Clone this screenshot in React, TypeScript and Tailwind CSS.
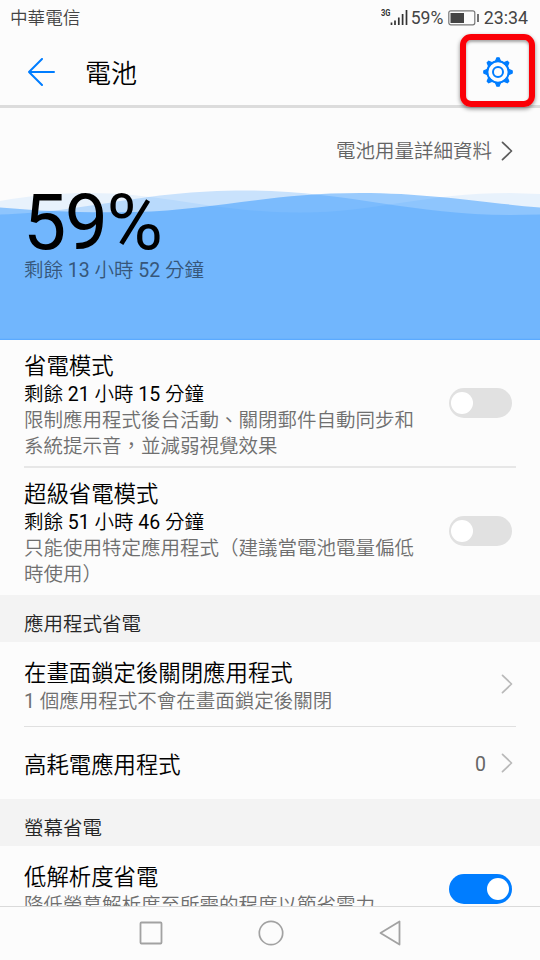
import React from "react";

type RowProps = { title: string; status?: string; detail?: string };

const Toggle = ({ on = false }: { on?: boolean }) => (
  <div className={on ? "flex h-[30px] w-[63px] shrink-0 items-center justify-end rounded-full bg-[#007dff] px-[2.5px]" : "flex h-[30px] w-[63px] shrink-0 items-center rounded-full bg-[#e1e1e1] px-[2.5px]"}>
    <div className="size-[22px] rounded-full bg-white" />
  </div>
);

const Chevron = ({ dark = false }: { dark?: boolean }) => (
  <svg width="12" height="20" viewBox="0 0 12 20" fill="none" stroke={dark ? "#5c5c5c" : "#b9b9b9"} strokeWidth="1.7" strokeLinecap="round" strokeLinejoin="round" className="shrink-0">
    <path d="M1.5 1.3 L10.5 10 L1.5 18.7" />
  </svg>
);

// Digits are set one step heavier than the surrounding CJK text.
const Mixed = ({ text }: { text: string }) => (
  <>
    {text.split(/(\d+)/).map((part, i) =>
      /^\d+$/.test(part) ? <span key={i} className="font-normal">{part}</span> : part
    )}
  </>
);

const Copy = ({ title, status, detail }: RowProps) => (
  <div className="flex flex-col">
    <div className="text-[22.4px] leading-[30px] text-black">{title}</div>
    {status && <div className="text-[19.5px] leading-[27px] text-black"><Mixed text={status} /></div>}
    {detail && <div className={status ? "w-[400px] text-[19.5px] leading-[26px] text-[#6f6f6f]" : "mt-px w-[400px] text-[19.5px] leading-[26px] text-[#6f6f6f]"}><Mixed text={detail} /></div>}
  </div>
);

const Section = ({ label }: { label: string }) => (
  <div className="flex h-[47px] shrink-0 items-center bg-[#f3f3f3] px-6 pt-[12px] text-[19.5px] leading-[27px] text-[#262626]">{label}</div>
);

export default function App() {
  return (
    <div className="flex h-[960px] w-[540px] flex-col overflow-hidden bg-[#fcfcfc] font-['Roboto','Noto_Sans_CJK_TC',sans-serif] font-[350]">
      <div className="flex h-9 shrink-0 items-center justify-between pr-3 pl-[10px] text-[17.6px] text-[#444]">
        <span>中華電信</span>
        <div className="flex items-center font-normal">
          <svg width="27" height="20" viewBox="0 0 27 20" className="shrink-0">
            <text x="0" y="8" fontSize="9" fontWeight="700" fontFamily="Roboto" textLength="9.5" lengthAdjust="spacingAndGlyphs" fill="#333">3G</text>
            <path d="M10.500 14.500v2.500M14 12.500V17M17.800 9.500V17M21.600 6V17M25.500 2V17" stroke="#333" strokeWidth="1.700" />
          </svg>
          <span className="ml-[3px] w-[33px] text-[17.6px]">59%</span>
          <svg width="31" height="16" viewBox="0 0 31 16" className="ml-[4px] shrink-0">
            <rect x="0.8" y="0.8" width="26" height="14" rx="2" fill="none" stroke="#777" strokeWidth="1.200" />
            <rect x="2.500" y="3" width="13.500" height="10" fill="#444" />
            <path d="M30 4v8" stroke="#444" strokeWidth="1.500" />
          </svg>
          <span className="ml-[5px] text-[17.8px]">23:34</span>
        </div>
      </div>

      <div className="flex h-[72px] shrink-0 items-center border-b-[3px] border-[#dcdcdc] pl-7">
        <svg width="27" height="28" viewBox="0 0 27 28" fill="none" stroke="#007dff" strokeWidth="2" strokeLinecap="round" strokeLinejoin="round" className="mt-[3px]">
          <path d="M26 14H1M14 1L1 14L14 27" />
        </svg>
        <h1 className="mt-[6px] ml-[30px] text-[26px] leading-[36px] text-black">電池</h1>
        <div className="mr-[5px] ml-auto flex h-[73px] w-[75px] items-center justify-center rounded-[11px] border-[6px] border-[#fb0007] pt-[2px] pl-px shadow-[0_2px_4px_rgba(0,0,0,0.45),inset_0_2px_3px_rgba(0,0,0,0.35)]">
          <svg width="32" height="32" viewBox="-16 -16 32 32" fill="none" stroke="#007dff" className="shrink-0">
            <circle r="10.700" strokeWidth="2" />
            <circle r="5" strokeWidth="2" />
            {[0, 45, 90, 135, 180, 225, 270, 315].map((angle) => (
              <path key={angle} transform={`rotate(${angle})`} d="M-2.600 -10.500L-1.100 -14.200H1.100L2.600 -10.500Z" fill="#007dff" strokeWidth="1.200" strokeLinejoin="round" />
            ))}
          </svg>
        </div>
      </div>

      <section className="relative h-[232px] shrink-0 overflow-hidden">
        <svg width="540" height="150" viewBox="0 190 540 150" fill="#007dff" className="absolute bottom-0 left-0">
          <path d="M0 201C30 195.500 60 193 90 193C165 193 215 212.500 300 212.500C375 212.500 425 193 510 193L540 194V340H0Z" fillOpacity=".08" />
          <path d="M0 214.500C90 212 140 190.500 245 190.500C345 190.500 410 215 510 215L540 214.500V340H0Z" fillOpacity=".2" />
          <path d="M0 207.500C45 211.500 85 213 135 212C215 210 270 193 360 193C430 193 485 203 540 207.500V340H0Z" fillOpacity=".39" />
          <path d="M0 339.400H540" stroke="#5baaff" strokeWidth="1.200" />
        </svg>
        <div className="relative flex flex-col">
          <div className="mt-[30px] flex items-center justify-end gap-[9px] pr-[27px] text-[19.5px] leading-[28px] text-[#646464]">
            電池用量詳細資料<div className="-mt-[3px]"><Chevron dark /></div>
          </div>
          <div className="mt-[27px] ml-[23px] text-[77px] leading-[60px] font-normal tracking-[-1.5px] text-black">59%</div>
          <div className="mt-[4px] ml-6 text-[19.5px] leading-[27px] text-[#36567a]"><Mixed text="剩餘 13 小時 52 分鐘" /></div>
        </div>
      </section>

      <main className="flex min-h-0 flex-1 flex-col overflow-hidden">
        <div className="mx-6 flex h-[128px] shrink-0 items-center justify-between border-b-2 border-[#e7e7e7] pt-[5px] pr-[4.5px]">
          <Copy title="省電模式" status="剩餘 21 小時 15 分鐘" detail="限制應用程式後台活動、關閉郵件自動同步和系統提示音，並減弱視覺效果" />
          <div className="-mt-[5px]"><Toggle /></div>
        </div>
        <div className="mx-6 flex h-[127px] shrink-0 items-center justify-between pt-[4px] pr-[4.5px]">
          <Copy title="超級省電模式" status="剩餘 51 小時 46 分鐘" detail="只能使用特定應用程式（建議當電池電量偏低時使用）" />
          <div className="-mt-[5px]"><Toggle /></div>
        </div>
        <Section label="應用程式省電" />
        <div className="mx-6 flex h-[85px] shrink-0 items-center justify-between border-b border-[#e0e0e0] pt-[4px] pr-[3px]">
          <Copy title="在畫面鎖定後關閉應用程式" detail="1 個應用程式不會在畫面鎖定後關閉" />
          <div className="-mt-[5px]"><Chevron /></div>
        </div>
        <div className="mx-6 flex h-[72px] shrink-0 items-center justify-between pt-[3px] pr-[3px]">
          <Copy title="高耗電應用程式" />
          <div className="flex items-center gap-[15px] text-[19.5px] font-normal text-[#666]">0<div className="-mt-[3px]"><Chevron /></div></div>
        </div>
        <Section label="螢幕省電" />
        <div className="mx-6 flex h-[84px] shrink-0 items-center justify-between pt-[5px] pr-[4.5px]">
          <Copy title="低解析度省電" detail="降低螢幕解析度至所需的程度以節省電力" />
          <div className="-mt-[4px]"><Toggle on /></div>
        </div>
      </main>

      <nav className="flex h-[54px] shrink-0 items-center justify-center gap-[95px] border-t border-[#dadada] bg-[#fcfcfc] pb-[2px] pr-px">
        <svg width="24" height="26" viewBox="0 0 24 26" fill="none" stroke="#a2a2a2" strokeWidth="1.800"><rect x="1.500" y="2.500" width="21" height="21" rx="1" /></svg>
        <svg width="26" height="26" viewBox="0 0 26 26" fill="none" stroke="#a2a2a2" strokeWidth="1.700"><circle cx="13" cy="13" r="11.700" /></svg>
        <svg width="22" height="26" viewBox="0 0 22 26" fill="none" stroke="#a2a2a2" strokeWidth="1.800" strokeLinejoin="round"><path d="M20.500 1.500V24.500L1.500 13Z" /></svg>
      </nav>
    </div>
  );
}
